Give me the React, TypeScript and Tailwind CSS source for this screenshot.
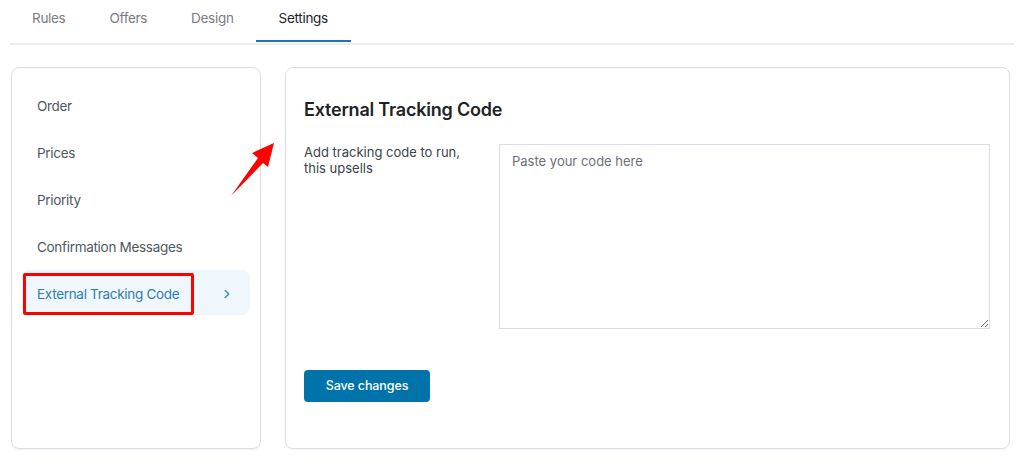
import React from "react";
import { ChevronRight } from "lucide-react";

const tabs = ["Rules", "Offers", "Design", "Settings"];
const items = ["Order", "Prices", "Priority", "Confirmation Messages", "External Tracking Code"];

export default function App() {
  return (
    <div
      className="relative w-[1024px] h-[466px] bg-white overflow-hidden"
      style={{ fontFamily: "Inter, 'Noto Sans', 'Liberation Sans', sans-serif" }}
    >
      <div className="px-[10px]">
        <div className="flex h-[42px]">
          {tabs.map((t) => {
            const active = t === "Settings";
            return (
              <div
                key={t}
                className={
                  active
                    ? "h-[42px] px-[23px] pt-[8px] text-[13.5px] tracking-[-0.3px] leading-[20px] text-[#1d2327] border-b-2 border-[#2271b1]"
                    : "h-[42px] px-[22px] pt-[8px] text-[13.5px] tracking-[-0.3px] leading-[20px] text-[#787c82] border-b-2 border-transparent"
                }
              >
                {t}
              </div>
            );
          })}
        </div>
        <div className="mt-[1px] h-[2px] bg-[#ececf2]" />

        <div className="mt-[22px] flex gap-[24px] pl-[1px]">
          <div className="w-[250px] h-[382px] rounded-[8px] border border-[#dedee8] shadow-[0_1px_1px_rgba(0,0,0,0.05)] px-[10px] pt-[14px] flex flex-col gap-[2px]">
            {items.map((it) => {
              const active = it === "External Tracking Code";
              return (
                <div
                  key={it}
                  className={
                    active
                      ? "relative h-[45px] rounded-[8px] bg-[#eff7fd] pl-[15px] pr-[16px] pt-[3px] flex items-center justify-between text-[13.5px] tracking-[-0.3px] text-[#2f7cb0]"
                      : "h-[45px] pl-[15px] pt-[3px] flex items-center text-[13.5px] tracking-[-0.3px] text-[#50575e]"
                  }
                >
                  <span>{it}</span>
                  {active && (
                    <>
                      <ChevronRight size={14} strokeWidth={2.5} className="text-[#2f8bd0]" />
                      <div className="absolute left-[1px] top-[3px] w-[171px] h-[42px] border-[3px] border-[#ff0000] rounded-[2px]" />
                    </>
                  )}
                </div>
              );
            })}
          </div>

          <div className="w-[725px] h-[382px] rounded-[8px] border border-[#dedee8] shadow-[0_1px_1px_rgba(0,0,0,0.05)] pl-[18px] pr-[19px] pt-[30px]">
            <h2 className="text-[18px] leading-[24px] font-semibold tracking-[-0.2px] text-[#1d2327]">External Tracking Code</h2>
            <div className="mt-[22px] flex">
              <div className="w-[195px] pr-[20px] text-[13px] leading-[16px] text-[#3c434a]">
                Add tracking code to run, this upsells
              </div>
              <textarea
                placeholder="Paste your code here"
                className="w-[491px] h-[185px] border border-[#dcdce6] px-[12px] py-[7px] text-[13px] leading-[18px] text-[#3c434a] placeholder:text-[#6a6f75] outline-none"
              />
            </div>
            <button className="mt-[41px] w-[126px] h-[32px] rounded-[4px] bg-[#0073aa] text-white text-[12.5px] tracking-[-0.1px] font-medium">
              Save changes
            </button>
          </div>
        </div>
      </div>

      <svg
        className="absolute left-0 top-0 pointer-events-none"
        width="1024"
        height="466"
        viewBox="0 0 1024 466"
      >
        <polygon points="274,143 252,153 258,158 231,196 263,163 268,167" fill="#ff0000" />
      </svg>
    </div>
  );
}
